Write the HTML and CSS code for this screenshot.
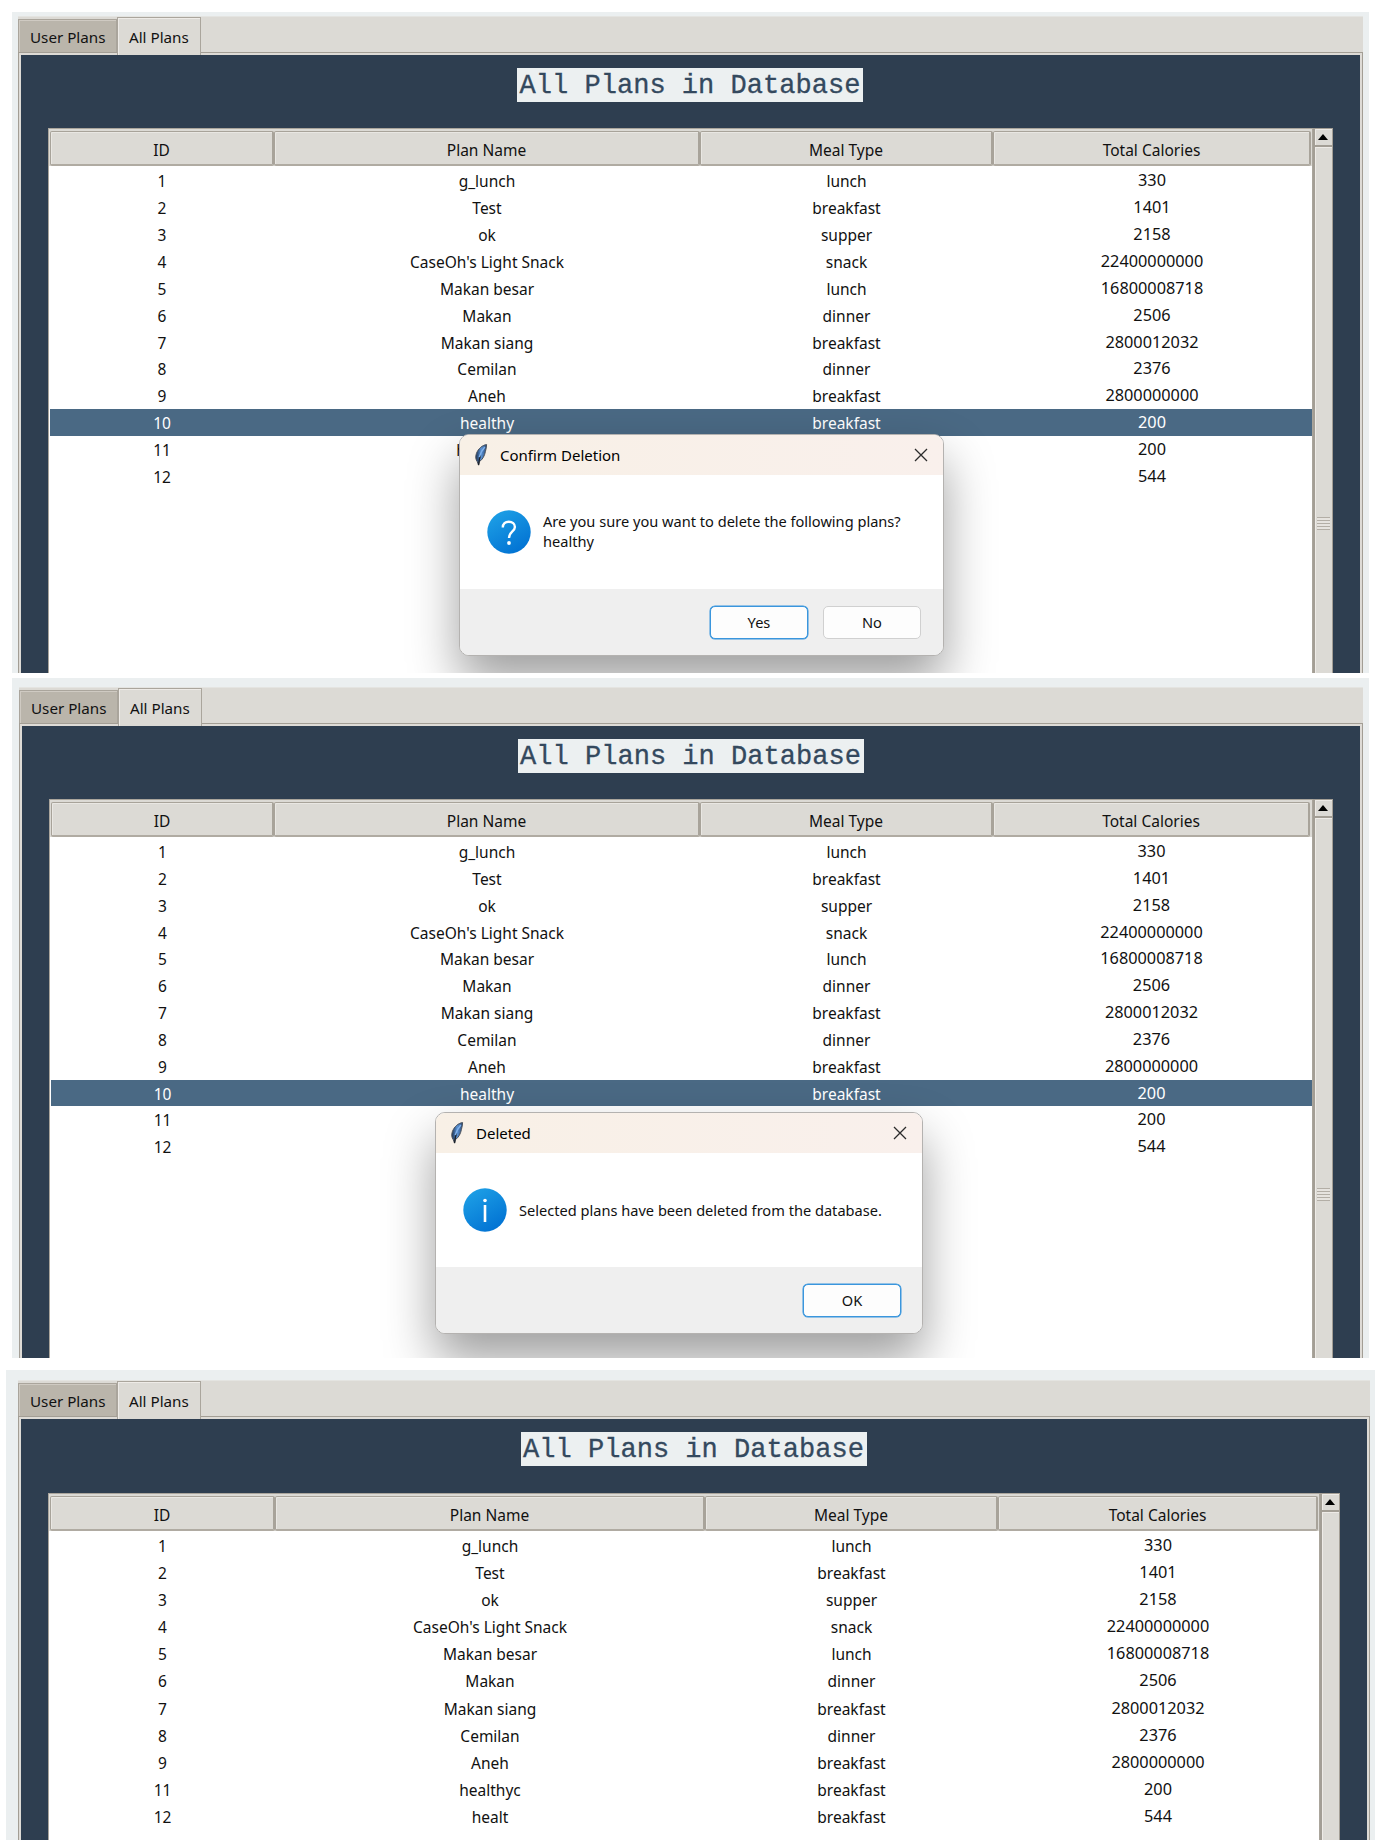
FILE: index.html
```
<!DOCTYPE html>
<html lang="en">
<head>
<meta charset="utf-8">
<title>All Plans</title>
<link rel="stylesheet" href="styles.css">
</head>
<body>
<svg class="defs" width="0" height="0" aria-hidden="true">
  <defs>
    <linearGradient id="disc" x1="0.2" y1="0" x2="0.8" y2="1"><stop offset="0" stop-color="#1ea0e6"/><stop offset="1" stop-color="#0070d2"/></linearGradient>
    <linearGradient id="quill" x1="0" y1="0" x2="1" y2="0"><stop offset="0" stop-color="#1d3557"/><stop offset="0.5" stop-color="#5a92d4"/><stop offset="1" stop-color="#2b4a78"/></linearGradient>
    <symbol id="feather" viewBox="0 0 14 22">
      <path d="M12.600 .6C8.600 1 4.200 4.600 2.400 9.500C1.300 12.800 1.700 15.500 3.200 17.600L4.600 21.200L5.400 17.600C8.600 15.600 10.600 11.800 11.400 7.600C11.800 5 12.700 3 12.600 .6Z" fill="url(#quill)" stroke="#4a505a" stroke-width="1"/>
      <path d="M6.600 11C5.400 14 4.900 17 4.500 21" fill="none" stroke="#1a2028" stroke-width="1.300"/>
      <path d="M10.800 3C8.500 5.500 6.500 9 5.300 13" fill="none" stroke="#7fb0ea" stroke-width="1.600"/>
    </symbol>
    <symbol id="cross" viewBox="0 0 14 14"><path d="M1 1L13 13M13 1L1 13" fill="none" stroke="#2b2b2b" stroke-width="1.300"/></symbol>
  </defs>
</svg>

<section class="panel panel-confirm">
  <div class="tabs"><div class="tab">User Plans</div><div class="tab active">All Plans</div></div>
  <div class="page">
    <h1 class="title">All Plans in Database</h1>
    <div class="view">
      <div class="tree">
        <div class="head"><span>ID</span><span>Plan Name</span><span>Meal Type</span><span>Total Calories</span></div>
        <div class="row"><span>1</span><span>g_lunch</span><span>lunch</span><span>330</span></div>
        <div class="row"><span>2</span><span>Test</span><span>breakfast</span><span>1401</span></div>
        <div class="row"><span>3</span><span>ok</span><span>supper</span><span>2158</span></div>
        <div class="row"><span>4</span><span>CaseOh's Light Snack</span><span>snack</span><span>22400000000</span></div>
        <div class="row"><span>5</span><span>Makan besar</span><span>lunch</span><span>16800008718</span></div>
        <div class="row"><span>6</span><span>Makan</span><span>dinner</span><span>2506</span></div>
        <div class="row"><span>7</span><span>Makan siang</span><span>breakfast</span><span>2800012032</span></div>
        <div class="row"><span>8</span><span>Cemilan</span><span>dinner</span><span>2376</span></div>
        <div class="row"><span>9</span><span>Aneh</span><span>breakfast</span><span>2800000000</span></div>
        <div class="row selected"><span>10</span><span>healthy</span><span>breakfast</span><span>200</span></div>
        <div class="row"><span>11</span><span>healthyc</span><span></span><span>200</span></div>
        <div class="row"><span>12</span><span></span><span></span><span>544</span></div>
      </div>
      <div class="scroll"><div class="up"></div><div class="thumb"><div class="grip"></div></div></div>
    </div>
  </div>
  <div class="dialog">
    <div class="bar"><svg class="feather"><use href="#feather"/></svg><span>Confirm Deletion</span><svg class="close"><use href="#cross"/></svg></div>
    <div class="message">
      <svg class="disc" viewBox="0 0 44 44"><circle cx="22" cy="22" r="21.700" fill="url(#disc)"/><path d="M15.800 17.500C15.800 13.700 18.300 11.700 21.800 11.700C25.300 11.700 27.900 13.700 27.900 17C27.900 21.500 22 21.500 22 28" fill="none" stroke="#fff" stroke-width="2.400"/><circle cx="22" cy="33" r="1.900" fill="#fff"/></svg>
      <p>Are you sure you want to delete the following plans?<br>healthy</p>
    </div>
    <div class="actions"><div class="button default">Yes</div><div class="button">No</div></div>
  </div>
</section>

<section class="panel panel-deleted">
  <div class="tabs"><div class="tab">User Plans</div><div class="tab active">All Plans</div></div>
  <div class="page">
    <h1 class="title">All Plans in Database</h1>
    <div class="view">
      <div class="tree">
        <div class="head"><span>ID</span><span>Plan Name</span><span>Meal Type</span><span>Total Calories</span></div>
        <div class="row"><span>1</span><span>g_lunch</span><span>lunch</span><span>330</span></div>
        <div class="row"><span>2</span><span>Test</span><span>breakfast</span><span>1401</span></div>
        <div class="row"><span>3</span><span>ok</span><span>supper</span><span>2158</span></div>
        <div class="row"><span>4</span><span>CaseOh's Light Snack</span><span>snack</span><span>22400000000</span></div>
        <div class="row"><span>5</span><span>Makan besar</span><span>lunch</span><span>16800008718</span></div>
        <div class="row"><span>6</span><span>Makan</span><span>dinner</span><span>2506</span></div>
        <div class="row"><span>7</span><span>Makan siang</span><span>breakfast</span><span>2800012032</span></div>
        <div class="row"><span>8</span><span>Cemilan</span><span>dinner</span><span>2376</span></div>
        <div class="row"><span>9</span><span>Aneh</span><span>breakfast</span><span>2800000000</span></div>
        <div class="row selected"><span>10</span><span>healthy</span><span>breakfast</span><span>200</span></div>
        <div class="row"><span>11</span><span></span><span></span><span>200</span></div>
        <div class="row"><span>12</span><span></span><span></span><span>544</span></div>
      </div>
      <div class="scroll"><div class="up"></div><div class="thumb"><div class="grip"></div></div></div>
    </div>
  </div>
  <div class="dialog">
    <div class="bar"><svg class="feather"><use href="#feather"/></svg><span>Deleted</span><svg class="close"><use href="#cross"/></svg></div>
    <div class="message">
      <svg class="disc" viewBox="0 0 44 44"><circle cx="22" cy="22" r="21.700" fill="url(#disc)"/><path d="M22 17V34" stroke="#fff" stroke-width="2.600"/><circle cx="22" cy="12.500" r="1.800" fill="#fff"/></svg>
      <p>Selected plans have been deleted from the database.</p>
    </div>
    <div class="actions"><div class="button default">OK</div></div>
  </div>
</section>

<section class="panel panel-result">
  <div class="tabs"><div class="tab">User Plans</div><div class="tab active">All Plans</div></div>
  <div class="page">
    <h1 class="title">All Plans in Database</h1>
    <div class="view">
      <div class="tree">
        <div class="head"><span>ID</span><span>Plan Name</span><span>Meal Type</span><span>Total Calories</span></div>
        <div class="row"><span>1</span><span>g_lunch</span><span>lunch</span><span>330</span></div>
        <div class="row"><span>2</span><span>Test</span><span>breakfast</span><span>1401</span></div>
        <div class="row"><span>3</span><span>ok</span><span>supper</span><span>2158</span></div>
        <div class="row"><span>4</span><span>CaseOh's Light Snack</span><span>snack</span><span>22400000000</span></div>
        <div class="row"><span>5</span><span>Makan besar</span><span>lunch</span><span>16800008718</span></div>
        <div class="row"><span>6</span><span>Makan</span><span>dinner</span><span>2506</span></div>
        <div class="row"><span>7</span><span>Makan siang</span><span>breakfast</span><span>2800012032</span></div>
        <div class="row"><span>8</span><span>Cemilan</span><span>dinner</span><span>2376</span></div>
        <div class="row"><span>9</span><span>Aneh</span><span>breakfast</span><span>2800000000</span></div>
        <div class="row"><span>11</span><span>healthyc</span><span>breakfast</span><span>200</span></div>
        <div class="row"><span>12</span><span>healt</span><span>breakfast</span><span>544</span></div>
      </div>
      <div class="scroll"><div class="up"></div><div class="thumb"></div></div>
    </div>
  </div>
</section>
</body>
</html>
```
FILE: styles.css
```
* { box-sizing: border-box; }
body {
  margin: 0;
  padding-top: 12px;
  width: 1381px;
  height: 1846px;
  overflow: hidden;
  background: #fff;
  color: #111;
  font: 15.5px/20px "Noto Sans", sans-serif;
}
.defs { position: absolute; }

.panel {
  position: relative;
  display: flex;
  flex-direction: column;
  overflow: hidden;
  width: 1357px;
  margin-left: 12px;
  background: #ebeff0;
}
.panel-confirm { height: 661px; padding: 4px 6px 0; --cols: 224px 426px 293px 318px; --row: 26.93px; --gap: 26px; }
.panel-deleted { height: 680px; margin-top: 5px; padding: 9px 6px 0 7px; --cols: 223px 426px 293px 317px; --row: 26.85px; --gap: 26px; }
.panel-result { height: 470px; width: 1369px; margin: 12px 0 0 6px; padding: 10px 5px 0 12px; --cols: 225px 430px 293px 320px; --row: 27.1px; --gap: 27px; }

.tabs {
  display: flex;
  align-items: flex-end;
  flex: none;
  height: 36px;
  background: #dcdad5;
  border-top: 1px solid #e4e4e1;
  font-size: 15.2px;
}
.tab {
  width: 99px;
  height: 33px;
  padding: 7px 0 0 11px;
  background: #bab5ab;
  border: solid #aaa59c;
  border-width: 1px 1px 0;
  box-shadow: inset 1px 1px #cfcac2;
  white-space: nowrap;
}
.tab.active {
  z-index: 1;
  width: 84px;
  height: 38px;
  margin-bottom: -3px;
  padding-top: 9px;
  background: #dcdad5;
  box-shadow: inset 1px 1px #eeebe7;
}

.page {
  flex: 1;
  display: flex;
  flex-direction: column;
  min-height: 0;
  padding: 15px 29px 0;
  background: #2e3e50;
  border: solid #a39e95;
  border-width: 1px 1px 0;
  box-shadow: inset 2px 2px #dedbd6, inset -2px 0 #dedbd6;
}
.title {
  align-self: center;
  flex: none;
  width: 346px;
  height: 34px;
  margin: 0 1px var(--gap) 0;
  padding-top: 1px;
  background: #ecf0f1;
  color: #34495e;
  font: 27.06px/34px "Liberation Mono", monospace;
  text-align: center;
  white-space: nowrap;
  -webkit-text-stroke: .3px #34495e;
}

.view { flex: 1; display: flex; min-height: 0; }
.tree {
  flex: 1;
  padding: 2px 0 0 1px;
  overflow: hidden;
  background: #fff;
  border: solid #aaa59c;
  border-width: 1px 1px 0;
}
.head, .row { display: grid; grid-template-columns: var(--cols); }
.head {
  height: 37px;
  margin: -2px 0 1px -1px;
  padding: 2px 0 0 1px;
  background: #dcdad5;
}
.head span {
  padding-top: 8px;
  border: 1px solid #a8a39a;
  border-bottom: 2px solid #b0aba2;
  border-right-width: 2px;
  border-radius: 2px;
  box-shadow: inset 1px 1px #e9e7e3;
  text-align: center;
}
.row { height: var(--row); text-align: center; line-height: 28px; }
.row span:last-child { font-size: 16.3px; line-height: 27px; }
.row.selected { background: #4a6984; color: #fff; }

.scroll {
  display: flex;
  flex-direction: column;
  width: 20px;
  background: #dcdad5;
  border: solid #a39e95;
  border-width: 1px 1px 0 2px;
}
.up {
  height: 18px;
  flex: none;
  padding: 5px 0 0 3px;
  border-bottom: 2px solid #a39e95;
  box-shadow: inset 1px 1px #eeebe7;
}
.up::before {
  content: "";
  display: block;
  width: 10px;
  height: 6px;
  background: #000;
  clip-path: polygon(50% 0, 100% 100%, 0 100%);
}
.thumb {
  flex: 1;
  padding-top: 370px;
  box-shadow: inset 1px 1px #eeebe7;
}
.grip {
  height: 13px;
  margin: 0 2px;
  background: repeating-linear-gradient(#b3aea6 0 1px, #e6e3df 1px 3px);
}

.dialog {
  position: absolute;
  display: flex;
  flex-direction: column;
  overflow: hidden;
  border: 1px solid #b4b2b0;
  border-radius: 10px;
  background: #fff;
  box-shadow: 0 26px 50px rgba(0, 0, 0, .38);
  font-size: 14.6px;
}
.panel-confirm .dialog { left: 447px; top: 422px; width: 485px; height: 222px; }
.panel-deleted .dialog { left: 423px; top: 434px; width: 488px; height: 222px; }
.bar {
  display: flex;
  align-items: center;
  height: 40px;
  padding: 0 15px 0 14px;
  background: linear-gradient(90deg, #f8f0e6, #f9f0ec);
  color: #000;
  font-size: 15px;
}
.feather { width: 14px; height: 22px; margin-right: 12px; }
.close { width: 14px; height: 14px; margin-left: auto; }
.message { display: flex; flex: 1; padding: 35px 0 0 27px; }
.disc { width: 44px; height: 44px; margin-right: 12px; }
.message p { align-self: flex-start; margin: 1px 0 0; white-space: nowrap; }
.panel-deleted .message p { margin-top: 12px; }
.actions {
  display: flex;
  justify-content: flex-end;
  gap: 15px;
  height: 66px;
  padding: 17px 21px 0;
  background: #efefef;
}
.panel-confirm .actions { padding-right: 22px; }
.button {
  width: 98px;
  height: 33px;
  background: #fdfdfd;
  border: 1px solid #d0d0d0;
  border-radius: 5px;
  line-height: 31px;
  text-align: center;
}
.button.default { border: 1.5px solid #3a96dd; box-shadow: 0 0 0 .5px #3a96dd; }
```
